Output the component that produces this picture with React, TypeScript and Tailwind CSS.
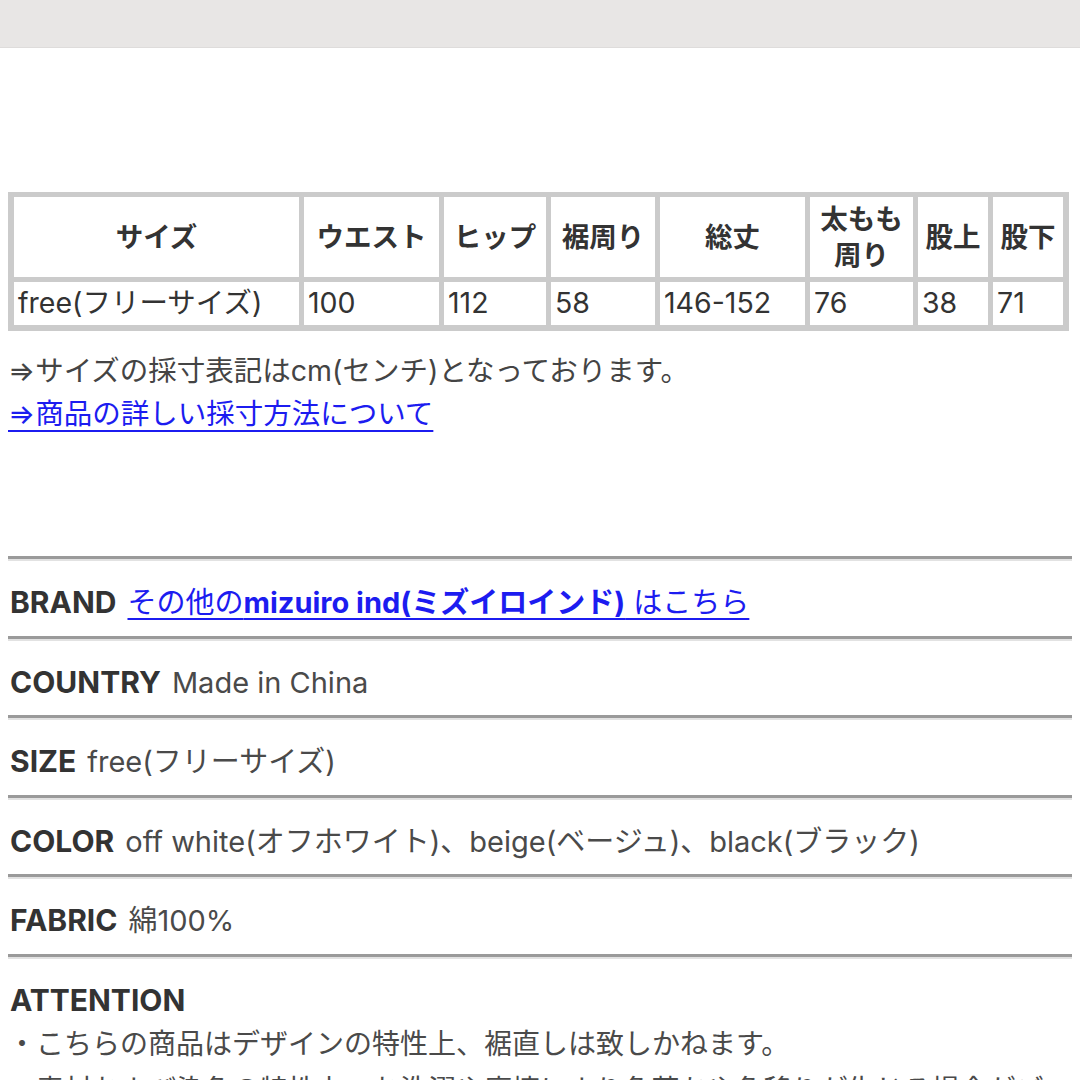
const font = { fontFamily: '"Inter", "Noto Sans CJK JP", sans-serif' };

const headers = [
  { label: 'サイズ', w: 'w-[285px]' },
  { label: 'ウエスト', w: 'w-[135px]' },
  { label: 'ヒップ', w: 'w-[102px]' },
  { label: '裾周り', w: 'w-[104px]' },
  { label: '総丈', w: 'w-[145px]' },
  { label: '太もも\n周り', w: 'w-[103px]' },
  { label: '股上', w: 'w-[70px]' },
  { label: '股下', w: 'w-[70px]' },
];

const values = ['free(フリーサイズ)', '100', '112', '58', '146-152', '76', '38', '71'];

function Rule() {
  return <div className="mx-[8px] h-[3px] bg-[#9a9a9a] border-b-2 border-[#e2e2e2] box-content" />;
}

function InfoRow({ label, children }: { label: string; children: React.ReactNode }) {
  return (
    <div>
      <Rule />
      <div className="h-[74.5px] pt-[9px] px-[10px] flex items-center">
        <div className="flex items-baseline gap-[11px] whitespace-nowrap leading-[40px]">
          <span className="font-bold text-[30px] text-[#333]">{label}</span>
          <span className="text-[29px] text-[#4a4a4a]">{children}</span>
        </div>
      </div>
    </div>
  );
}

export default function App() {
  return (
    <div className="w-[1080px] h-[1080px] bg-white overflow-hidden" style={font}>
      <div className="h-[48px] bg-[#e8e6e5] border-b border-[#dedcdb]" />

      <div className="mt-[144px] ml-[8px] w-[1061px] bg-[#cbcbcb] px-[6px] pt-[5px] pb-[6px] flex flex-col gap-[5px]">
        <div className="flex gap-[5px]">
          {headers.map((h) => (
            <div
              key={h.label}
              className={`${h.w} h-[80px] bg-white flex items-center justify-center text-center font-bold text-[27.5px] leading-[36px] text-[#333] whitespace-pre-line`}
            >
              {h.label}
            </div>
          ))}
        </div>
        <div className="flex gap-[5px]">
          {values.map((v, i) => (
            <div
              key={i}
              className={`${headers[i].w} h-[43px] bg-white flex items-center pl-[4px] text-[28.5px] text-[#333] whitespace-nowrap`}
            >
              {v}
            </div>
          ))}
        </div>
      </div>

      <div className="mt-[18px] px-[8px] text-[28.5px] leading-[43px]">
        <p className="text-[#444]">⇒サイズの採寸表記はcm(センチ)となっております。</p>
        <p>
          <a href="#" className="text-[#1c1cf0] underline underline-offset-[6px] decoration-2">
            ⇒商品の詳しい採寸方法について
          </a>
        </p>
      </div>

      <div className="mt-[121px]">
        <InfoRow label="BRAND">
          <a href="#" className="text-[#1c1cf0] underline underline-offset-[5px] decoration-2">
            その他の<span className="font-bold">mizuiro ind(ミズイロインド)</span> はこちら
          </a>
        </InfoRow>
        <InfoRow label="COUNTRY">Made in China</InfoRow>
        <InfoRow label="SIZE">free(フリーサイズ)</InfoRow>
        <InfoRow label="COLOR">off white(オフホワイト)、beige(ベージュ)、black(ブラック)</InfoRow>
        <InfoRow label="FABRIC">綿100%</InfoRow>
        <Rule />
        <div className="px-[10px] pt-[20px] text-[#333]">
          <p className="font-bold text-[30px] leading-[42px]">ATTENTION</p>
          <p className="text-[28px] leading-[46px] text-[#4a4a4a] -ml-[2px]">・こちらの商品はデザインの特性上、裾直しは致しかねます。</p>
          <p className="text-[28px] leading-[46px] text-[#4a4a4a] -ml-[2px]">・素材および染色の特性上、お洗濯や摩擦により色落ちや色移りが生じる場合がございます。</p>
        </div>
      </div>
    </div>
  );
}
